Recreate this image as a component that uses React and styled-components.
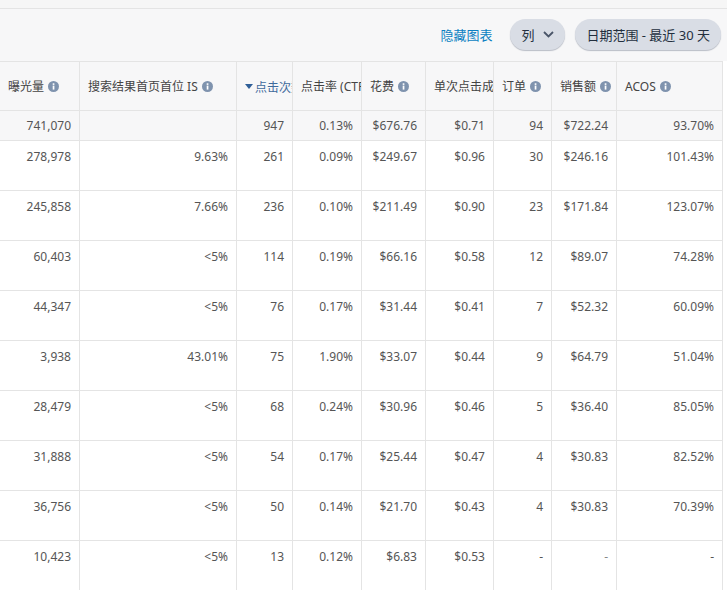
import React from "react";
import styled, {createGlobalStyle} from "styled-components";

const Global = createGlobalStyle`
html, body {
    margin: 0;
    padding: 0;
    background: #fff;
    overflow: hidden;
}
body {
    font-family: "Noto Sans", "Noto Sans CJK SC", sans-serif;
    color: #444;
}
`;

const Page = styled.div`
width: 727px;
height: 590px;
overflow: hidden;
`;

const TopStrip = styled.div`
height: 8px;
background: #f6f6f6;
border-bottom: 1px solid #e4e4e4;
`;

const Toolbar = styled.div`
height: 52px;
background: #f7f7f8;
display: flex;
align-items: center;
justify-content: flex-end;
padding: 0 6px 2px 0;
gap: 10px;
box-sizing: border-box;
`;

const HideLink = styled.a`
font-size: 13px;
color: #0a7fc2;
margin-right: 8px;
`;

const Pill = styled.button`
height: 31px;
border: none;
border-radius: 16px;
background: #d9dde5;
box-shadow: 0 1px 1px #b9bdc6;
color: #232f3e;
font-family: inherit;
font-size: 13px;
padding: 0 11px;
display: flex;
align-items: center;
gap: 9px;
`;

const Grid = styled.table`
table-layout: fixed;
border-collapse: separate;
border-spacing: 0;
width: 723px;
`;

const Head = styled.th`
height: 50px;
padding: 0 0 0 8px;
box-sizing: border-box;
background: #f7f7f8;
border-top: 1px solid #e4e4e4;
border-bottom: 1px solid #e4e4e4;
border-right: 1px solid #e4e4e4;
font-size: 12px;
font-weight: 400;
color: ${props => props.$active ? "#3f6a9c" : "#444"};
text-align: left;
white-space: nowrap;
overflow: hidden;
`;

const Total = styled.td`
height: 30px;
padding: 0 8px;
box-sizing: border-box;
background: #f7f7f8;
border-bottom: 1px solid #e4e4e4;
border-right: 1px solid #e4e4e4;
font-size: 12px;
text-align: right;
color: #555;
`;

const Cell = styled.td`
height: 50px;
padding: 8px 8px 0;
box-sizing: border-box;
border-bottom: 1px solid #e4e4e4;
border-right: 1px solid #e4e4e4;
font-size: 12px;
line-height: 16px;
text-align: right;
vertical-align: top;
color: ${props => props.$muted ? "#888" : "#555"};
`;

const HeadLabel = styled.span`
display: inline-flex;
align-items: center;
gap: 4px;
`;

const SortMark = styled.span`
display: inline-flex;
margin-right: -2px;
`;

const Info = () => <svg width="11" height="11" viewBox="0 0 11 11">
    <circle cx="5.5" cy="5.5" r="5.5" fill="#7f93ae"/>
    <rect x="4.7" y="4.6" width="1.7" height="4" fill="#fff"/>
    <rect x="4.7" y="2.3" width="1.7" height="1.6" fill="#fff"/>
</svg>;

const Chevron = () => <svg width="11" height="7" viewBox="0 0 11 7" fill="none">
    <path d="M1 1l4.5 4.5L10 1" stroke="#4a5568" strokeWidth="1.8"/>
</svg>;

const SortArrow = () => <svg width="8" height="5" viewBox="0 0 8 5">
    <path d="M0 0h8L4 5z" fill="#2f5f98"/>
</svg>;

const widths = [80, 157, 56, 69, 64, 68, 58, 65, 106];

const heads = [
    {label: "曝光量", info: true},
    {label: "搜索结果首页首位 IS", info: true},
    {label: "点击次数", active: true},
    {label: "点击率 (CTR)"},
    {label: "花费", info: true},
    {label: "单次点击成本"},
    {label: "订单", info: true},
    {label: "销售额", info: true},
    {label: "ACOS", info: true},
];

const totals = ["741,070", "", "947", "0.13%", "$676.76", "$0.71", "94", "$722.24", "93.70%"];

const rows = [
    ["278,978", "9.63%", "261", "0.09%", "$249.67", "$0.96", "30", "$246.16", "101.43%"],
    ["245,858", "7.66%", "236", "0.10%", "$211.49", "$0.90", "23", "$171.84", "123.07%"],
    ["60,403", "<5%", "114", "0.19%", "$66.16", "$0.58", "12", "$89.07", "74.28%"],
    ["44,347", "<5%", "76", "0.17%", "$31.44", "$0.41", "7", "$52.32", "60.09%"],
    ["3,938", "43.01%", "75", "1.90%", "$33.07", "$0.44", "9", "$64.79", "51.04%"],
    ["28,479", "<5%", "68", "0.24%", "$30.96", "$0.46", "5", "$36.40", "85.05%"],
    ["31,888", "<5%", "54", "0.17%", "$25.44", "$0.47", "4", "$30.83", "82.52%"],
    ["36,756", "<5%", "50", "0.14%", "$21.70", "$0.43", "4", "$30.83", "70.39%"],
    ["10,423", "<5%", "13", "0.12%", "$6.83", "$0.53", "-", "-", "-"],
];

export default function App() {
    return <Page>
        <Global/>
        <TopStrip/>
        <Toolbar>
            <HideLink>隐藏图表</HideLink>
            <Pill>列 <Chevron/></Pill>
            <Pill>日期范围 - 最近 30 天</Pill>
        </Toolbar>
        <Grid>
            <colgroup>
                {widths.map((w, i) => <col key={i} width={w}/>)}
            </colgroup>
            <thead>
                <tr>
                    {heads.map(h => <Head key={h.label} $active={h.active}>
                        <HeadLabel>
                            {h.active && <SortMark><SortArrow/></SortMark>}
                            {h.label}
                            {h.info && <Info/>}
                        </HeadLabel>
                    </Head>)}
                </tr>
            </thead>
            <tbody>
                <tr>{totals.map((t, i) => <Total key={i}>{t}</Total>)}</tr>
                {rows.map(row => <tr key={row[0]}>
                    {row.map((c, i) => <Cell key={i} $muted={c === "-" && i === 7}>{c}</Cell>)}
                </tr>)}
            </tbody>
        </Grid>
    </Page>;
}
